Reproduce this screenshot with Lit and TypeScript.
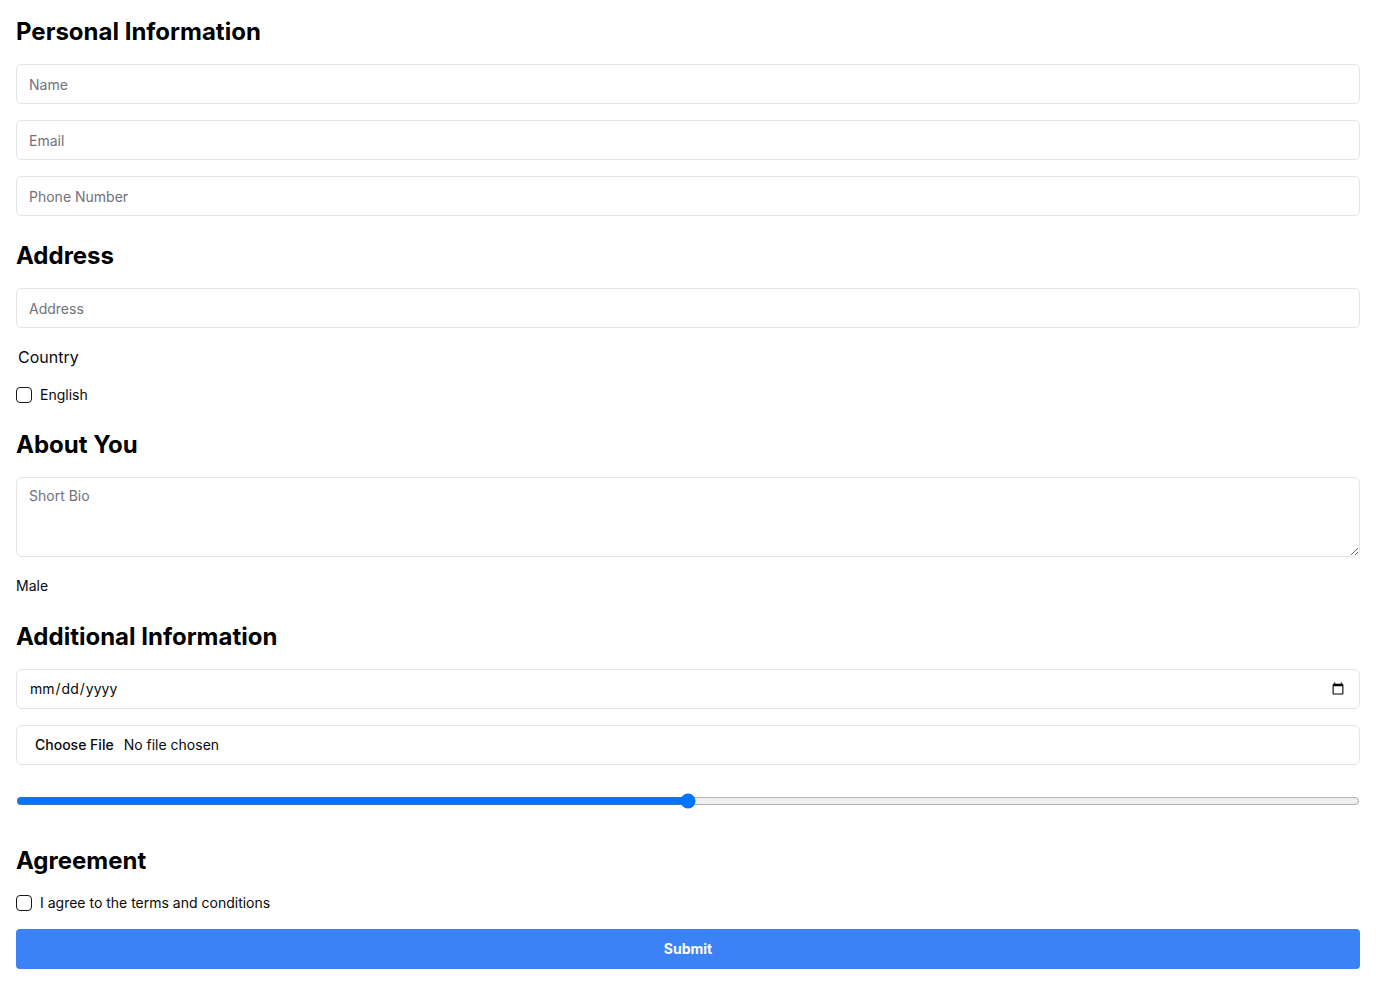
import { LitElement, html, css } from "lit";
import { customElement } from "lit/decorators.js";

@customElement("app-root")
export class AppRoot extends LitElement {
  static styles = css`
    :host {
      display: block;
      font: 400 16px/24px Inter, sans-serif;
      color: #09090b;
      background: #fff;
    }
    *, ::before, ::after { box-sizing: border-box; }
    form, section {
      display: flex;
      flex-direction: column;
      gap: 16px;
    }
    form { padding: 16px; gap: 24px; }
    h2 {
      margin: 0;
      font-size: 24px;
      line-height: 32px;
      font-weight: 700;
      color: #000;
    }
    .field {
      display: block;
      width: 100%;
      height: 40px;
      margin: 0;
      padding: 8px 12px;
      border: 1px solid #e4e4e7;
      border-radius: 6px;
      background: #fff;
      color: #09090b;
      font: 400 14px/20px Inter, sans-serif;
    }
    .field::placeholder { color: #71717a; opacity: 1; }
    .bio { min-height: 80px; height: 80px; resize: vertical; }
    .field::file-selector-button {
      margin: 0 4px 0 0;
      padding: 1px 6px;
      border: 0;
      background: transparent;
      color: inherit;
      font: 500 14px/20px Inter, sans-serif;
    }
    .country {
      align-self: flex-start;
      appearance: none;
      height: 25px;
      margin: 0;
      padding: 0 2px;
      border: 0;
      background: transparent;
      color: inherit;
      font: inherit;
    }
    .choice {
      display: flex;
      align-items: center;
      gap: 8px;
      font-size: 14px;
      line-height: 20px;
    }
    .check {
      appearance: none;
      width: 16px;
      height: 16px;
      margin: 0;
      border: 1px solid #18181b;
      border-radius: 4px;
      background: #fff;
    }
    .check:checked { background: #18181b; }
    .plain { margin: 0; }
    .small { font-size: 14px; line-height: 20px; }
    .range { width: 100%; height: 40px; margin: 0; }
    .submit {
      height: 40px;
      border: 0;
      border-radius: 4px;
      background: #3b82f6;
      color: #fff;
      font: 700 14px/20px Inter, sans-serif;
      cursor: pointer;
    }
  `;

  render() {
    return html`
      <form @submit=${(e: Event) => e.preventDefault()}>
        <section>
          <h2>Personal Information</h2>
          <input class="field" type="text" placeholder="Name" aria-label="Name" />
          <input class="field" type="email" placeholder="Email" aria-label="Email" />
          <input class="field" type="tel" placeholder="Phone Number" aria-label="Phone Number" />
        </section>
        <section>
          <h2>Address</h2>
          <input class="field" type="text" placeholder="Address" aria-label="Address" />
          <select class="country" aria-label="Country"><option>Country</option></select>
          <label class="choice"><input class="check" type="checkbox" />English</label>
        </section>
        <section>
          <h2>About You</h2>
          <textarea class="field bio" placeholder="Short Bio" aria-label="Short Bio"></textarea>
          <p class="plain"><span class="small">Male</span></p>
        </section>
        <section>
          <h2>Additional Information</h2>
          <input class="field" type="date" aria-label="Date" />
          <input class="field" type="file" aria-label="File" />
          <input class="range" type="range" min="0" max="100" value="50" aria-label="Range" />
        </section>
        <section>
          <h2>Agreement</h2>
          <label class="choice"><input class="check" type="checkbox" />I agree to the terms and conditions</label>
          <button class="submit" type="submit">Submit</button>
        </section>
      </form>
    `;
  }
}
